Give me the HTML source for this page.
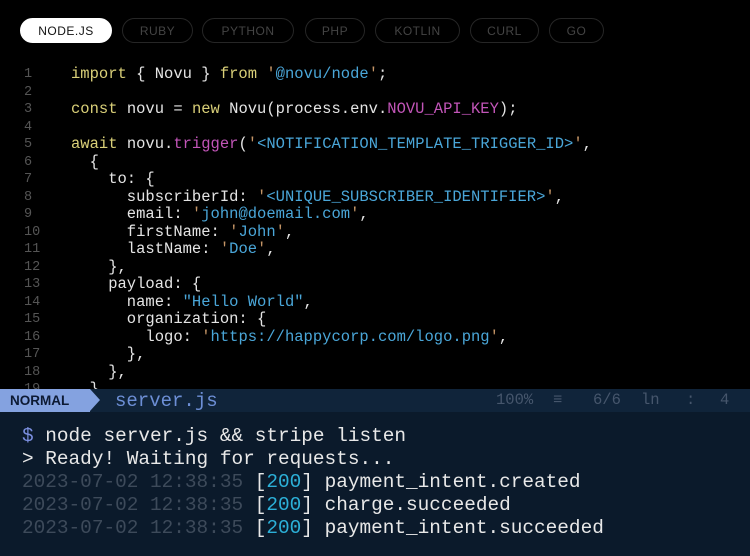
<!DOCTYPE html>
<html><head><meta charset="utf-8"><style>
*{margin:0;padding:0;box-sizing:border-box}
body{width:750px;height:556px;background:#000;overflow:hidden;position:relative;font-family:"Liberation Mono",monospace}
.pill{position:absolute;top:18px;height:25px;border:1.5px solid #262626;border-radius:13px;color:#444;font-family:"Liberation Sans",sans-serif;font-size:12px;letter-spacing:.5px;display:flex;align-items:center;justify-content:center}
.pill.on{background:#fff;color:#111;border-color:#fff}
.ln{position:absolute;left:24px;width:30px;color:#555;font-size:13.5px}
.cd{position:absolute;left:71px;color:#e4e4e4;font-size:15.5px;white-space:pre}
.k{color:#d9cf78}.s{color:#4aa6d8}.q{color:#c59566}.m{color:#c255b8}
.bar{position:absolute;left:0;top:389px;width:750px;height:23px;background:#10243a}
.term{position:absolute;left:0;top:412px;width:750px;height:144px;background:#0b1a2b}
.normal{position:absolute;left:0;top:389px;height:23px;width:90px;background:#84a2e0;color:#0d1a33;font-family:"Liberation Sans",sans-serif;font-weight:bold;font-size:13.5px;line-height:23px;padding-left:10px}
.arrow{position:absolute;left:90px;top:389px;width:0;height:0;border-top:11.5px solid transparent;border-bottom:11.5px solid transparent;border-left:10px solid #84a2e0}
.t{position:absolute;left:22px;font-size:19.4px;color:#e8e8e8;white-space:pre}
.g{color:#3d4a5a}.c{color:#2cb0d8}
.st{position:absolute;top:391px;font-size:15.5px;color:#46566c}
</style></head><body>
<div class="pill on" style="left:20px;width:92px">NODE.JS</div>
<div class="pill" style="left:122px;width:71px">RUBY</div>
<div class="pill" style="left:202px;width:92px">PYTHON</div>
<div class="pill" style="left:305px;width:60px">PHP</div>
<div class="pill" style="left:375px;width:85px">KOTLIN</div>
<div class="pill" style="left:470px;width:69px">CURL</div>
<div class="pill" style="left:549px;width:55px">GO</div>

<div class="ln" style="top:67px">1</div><div class="cd" style="top:65px"><span class="k">import</span> { Novu } <span class="k">from</span> <span class="q">'</span><span class="s">@novu/node</span><span class="q">'</span>;</div>
<div class="ln" style="top:85px">2</div>
<div class="ln" style="top:102px">3</div><div class="cd" style="top:100px"><span class="k">const</span> novu = <span class="k">new</span> Novu(process.env.<span class="m">NOVU_API_KEY</span>);</div>
<div class="ln" style="top:120px">4</div>
<div class="ln" style="top:137px">5</div><div class="cd" style="top:135px"><span class="k">await</span> novu.<span class="m">trigger</span>(<span class="q">'</span><span class="s">&lt;NOTIFICATION_TEMPLATE_TRIGGER_ID&gt;</span><span class="q">'</span>,</div>
<div class="ln" style="top:155px">6</div><div class="cd" style="top:153px">  {</div>
<div class="ln" style="top:172px">7</div><div class="cd" style="top:170px">    to: {</div>
<div class="ln" style="top:190px">8</div><div class="cd" style="top:188px">      subscriberId: <span class="q">'</span><span class="s">&lt;UNIQUE_SUBSCRIBER_IDENTIFIER&gt;</span><span class="q">'</span>,</div>
<div class="ln" style="top:207px">9</div><div class="cd" style="top:205px">      email: <span class="q">'</span><span class="s">john@doemail.com</span><span class="q">'</span>,</div>
<div class="ln" style="top:225px">10</div><div class="cd" style="top:223px">      firstName: <span class="q">'</span><span class="s">John</span><span class="q">'</span>,</div>
<div class="ln" style="top:242px">11</div><div class="cd" style="top:240px">      lastName: <span class="q">'</span><span class="s">Doe</span><span class="q">'</span>,</div>
<div class="ln" style="top:260px">12</div><div class="cd" style="top:258px">    },</div>
<div class="ln" style="top:277px">13</div><div class="cd" style="top:275px">    payload: {</div>
<div class="ln" style="top:295px">14</div><div class="cd" style="top:293px">      name: <span class="s">"Hello World"</span>,</div>
<div class="ln" style="top:312px">15</div><div class="cd" style="top:310px">      organization: {</div>
<div class="ln" style="top:330px">16</div><div class="cd" style="top:328px">        logo: <span class="q">'</span><span class="s">https://happycorp.com/logo.png</span><span class="q">'</span>,</div>
<div class="ln" style="top:347px">17</div><div class="cd" style="top:345px">      },</div>
<div class="ln" style="top:365px">18</div><div class="cd" style="top:363px">    },</div>
<div class="ln" style="top:382px">19</div><div class="cd" style="top:380px">  }</div>

<div class="bar"></div>
<div class="normal">NORMAL</div><div class="arrow"></div>
<div style="position:absolute;left:115px;top:390px;font-size:19px;color:#6d8fd6">server.js</div>
<div class="st" style="left:496px">100%</div>
<div class="st" style="left:553px">≡</div>
<div class="st" style="left:593px">6/6</div>
<div class="st" style="left:641px">ln</div>
<div class="st" style="left:686px">:</div>
<div class="st" style="left:720px">4</div>
<div class="term"></div>
<div class="t" style="top:425px"><span style="color:#7b8fe0">$</span> node server.js &amp;&amp; stripe listen</div>
<div class="t" style="top:448px">&gt; Ready! Waiting for requests...</div>
<div class="t" style="top:471px"><span class="g">2023-07-02 12:38:35</span> [<span class="c">200</span>] payment_intent.created</div>
<div class="t" style="top:494px"><span class="g">2023-07-02 12:38:35</span> [<span class="c">200</span>] charge.succeeded</div>
<div class="t" style="top:517px"><span class="g">2023-07-02 12:38:35</span> [<span class="c">200</span>] payment_intent.succeeded</div>
</body></html>
